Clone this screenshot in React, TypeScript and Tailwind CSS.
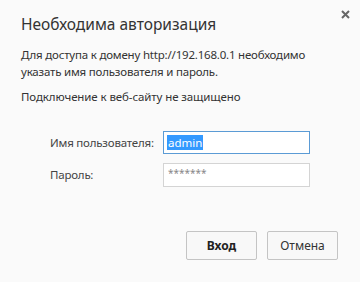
export default function App() {
  return (
    <div
      className="relative w-[360px] h-[282px] bg-[#fafafa] text-[#333] overflow-hidden"
      style={{ fontFamily: '"Noto Sans", "Open Sans", sans-serif' }}
    >
      <button className="absolute right-[9px] top-[9px] w-[11px] h-[11px] flex items-center justify-center">
        <svg width="9" height="9" viewBox="0 0 9 9">
          <path d="M1 1L8 8M8 1L1 8" stroke="#666" strokeWidth="2" />
        </svg>
      </button>
      <div className="flex flex-col pl-[21px] pt-[13px]">
        <h1 className="text-[15.5px] leading-[22px] text-[#333]">Необходима авторизация</h1>
        <p className="mt-[11px] text-[11.5px] leading-[17px] text-[#333] tracking-[-0.2px] whitespace-nowrap">
          Для доступа к домену http://192.168.0.1 необходимо
          <br />
          указать имя пользователя и пароль.
        </p>
        <p className="mt-[8px] text-[11.5px] leading-[17px] text-[#333] tracking-[-0.1px]">
          Подключение к веб-сайту не защищено
        </p>
        <div className="mt-[26px] grid grid-cols-[113px_147px] gap-y-[9px] items-center pl-[29px]">
          <label className="text-[11.5px] text-[#444] tracking-[-0.2px]">Имя пользователя:</label>
          <div className="h-[23px] border border-[#5b9bd5] bg-white flex items-center pl-[3px]">
            <span className="bg-[#3399ff] text-white text-[11.5px] leading-[15px] px-[1px]">admin</span>
          </div>
          <label className="text-[11.5px] text-[#444] tracking-[-0.2px]">Пароль:</label>
          <div className="h-[24px] border border-[#d4d4d4] bg-white flex items-start pl-[4px] pt-[4px]">
            <span className="text-[#888] text-[10px] leading-[10px]">*******</span>
          </div>
        </div>
      </div>
      <div className="absolute right-[22px] top-[231px] flex gap-[10px]">
        <button className="w-[71px] h-[29px] border border-[#c4c4c4] rounded-[2px] bg-[#f8f8f8] text-[12px] font-bold text-[#222]">
          Вход
        </button>
        <button className="w-[71px] h-[29px] border border-[#c4c4c4] rounded-[2px] bg-[#f8f8f8] text-[12px] text-[#333]">
          Отмена
        </button>
      </div>
    </div>
  );
}
